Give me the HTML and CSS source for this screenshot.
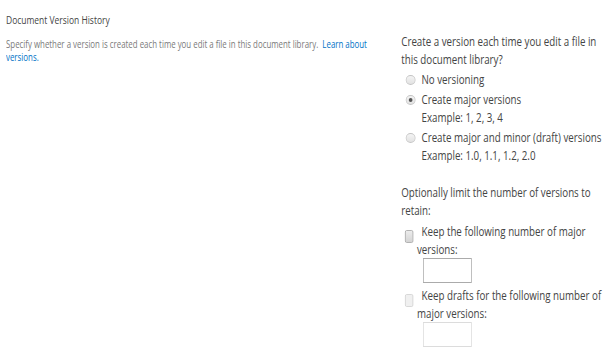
FILE: index.html
```html
<!DOCTYPE html>
<html>
<head>
<meta charset="utf-8">
<link rel="stylesheet" href="styles.css">
</head>
<body>
<div class="page">
  <div class="left">
    <div class="title">Document Version History</div>
    <div class="desc">Specify whether a version is created each time you edit a file in this document library. &nbsp;<a class="link">Learn about versions.</a></div>
  </div>
  <div class="right">
    <div class="q">Create a version each time you edit a file in this document library?</div>
    <div class="opt"><span class="radio"></span><div class="otext">No versioning</div></div>
    <div class="opt"><span class="radio on"></span><div class="otext">Create major versions<br>Example: 1, 2, 3, 4</div></div>
    <div class="opt"><span class="radio"></span><div class="otext">Create major and minor (draft) versions<br>Example: 1.0, 1.1, 1.2, 2.0</div></div>
    <div class="q q2">Optionally limit the number of versions to retain:</div>
    <div class="chk"><span class="box"></span><div class="ctext">Keep the following number of major versions:</div></div>
    <div class="inp"></div>
    <div class="chk dis"><span class="box"></span><div class="ctext">Keep drafts for the following number of major versions:</div></div>
    <div class="inp dis"></div>
  </div>
</div>
</body>
</html>
```
FILE: styles.css
```css
html, body { margin: 0; padding: 0; background: #fff; overflow: hidden; width: 604px; height: 351px; }
body { font-family: "Open Sans", "DejaVu Sans", sans-serif; color: #444; }
.page { display: flex; width: 804px; height: 351px; transform: scaleX(0.75); transform-origin: 0 0; }
.left { width: 535px; padding: 12px 0 0 8px; box-sizing: border-box; }
.title { font-size: 11.3px; color: #444; line-height: 15px; }
.desc { margin-top: 11px; font-size: 10.5px; line-height: 13px; color: #7a7a7a; width: 500px; }
.link { color: #0072c6; }
.right { width: 269px; padding: 32px 0 0 0; box-sizing: border-box; font-size: 13px; line-height: 18px; color: #444; }
.opt { display: flex; align-items: flex-start; padding-left: 6px; margin-top: 2px; }
.radio { width: 13px; height: 10px; border: 1px solid #c4c4c4; border-radius: 50%; background: linear-gradient(#f4f4f4, #e2e2e2); box-sizing: border-box; margin: 5px 8px 0 0; flex: none; position: relative; }
.radio.on::after { content: ""; position: absolute; left: 3px; top: 2px; width: 5px; height: 4px; border-radius: 50%; background: #555; }
.q2 { margin-top: 19px; }
.chk { display: flex; align-items: flex-start; padding-left: 5px; margin-top: 3px; }
.box { width: 11px; height: 13px; border: 1px solid #a8a8a8; border-radius: 2px; background: linear-gradient(#ececec, #d4d4d4); box-sizing: border-box; margin: 8px 5px 0 0; flex: none; }
.ctext { width: 249px; text-indent: 6px; }
.inp { width: 65px; height: 25px; border: 1px solid #ababab; margin: 0 0 3px 29px; box-sizing: border-box; }
.chk.dis .box { border-color: #d4d4d4; background: #f0f0f0; }
.inp.dis { border-color: #dcdcdc; }
```
